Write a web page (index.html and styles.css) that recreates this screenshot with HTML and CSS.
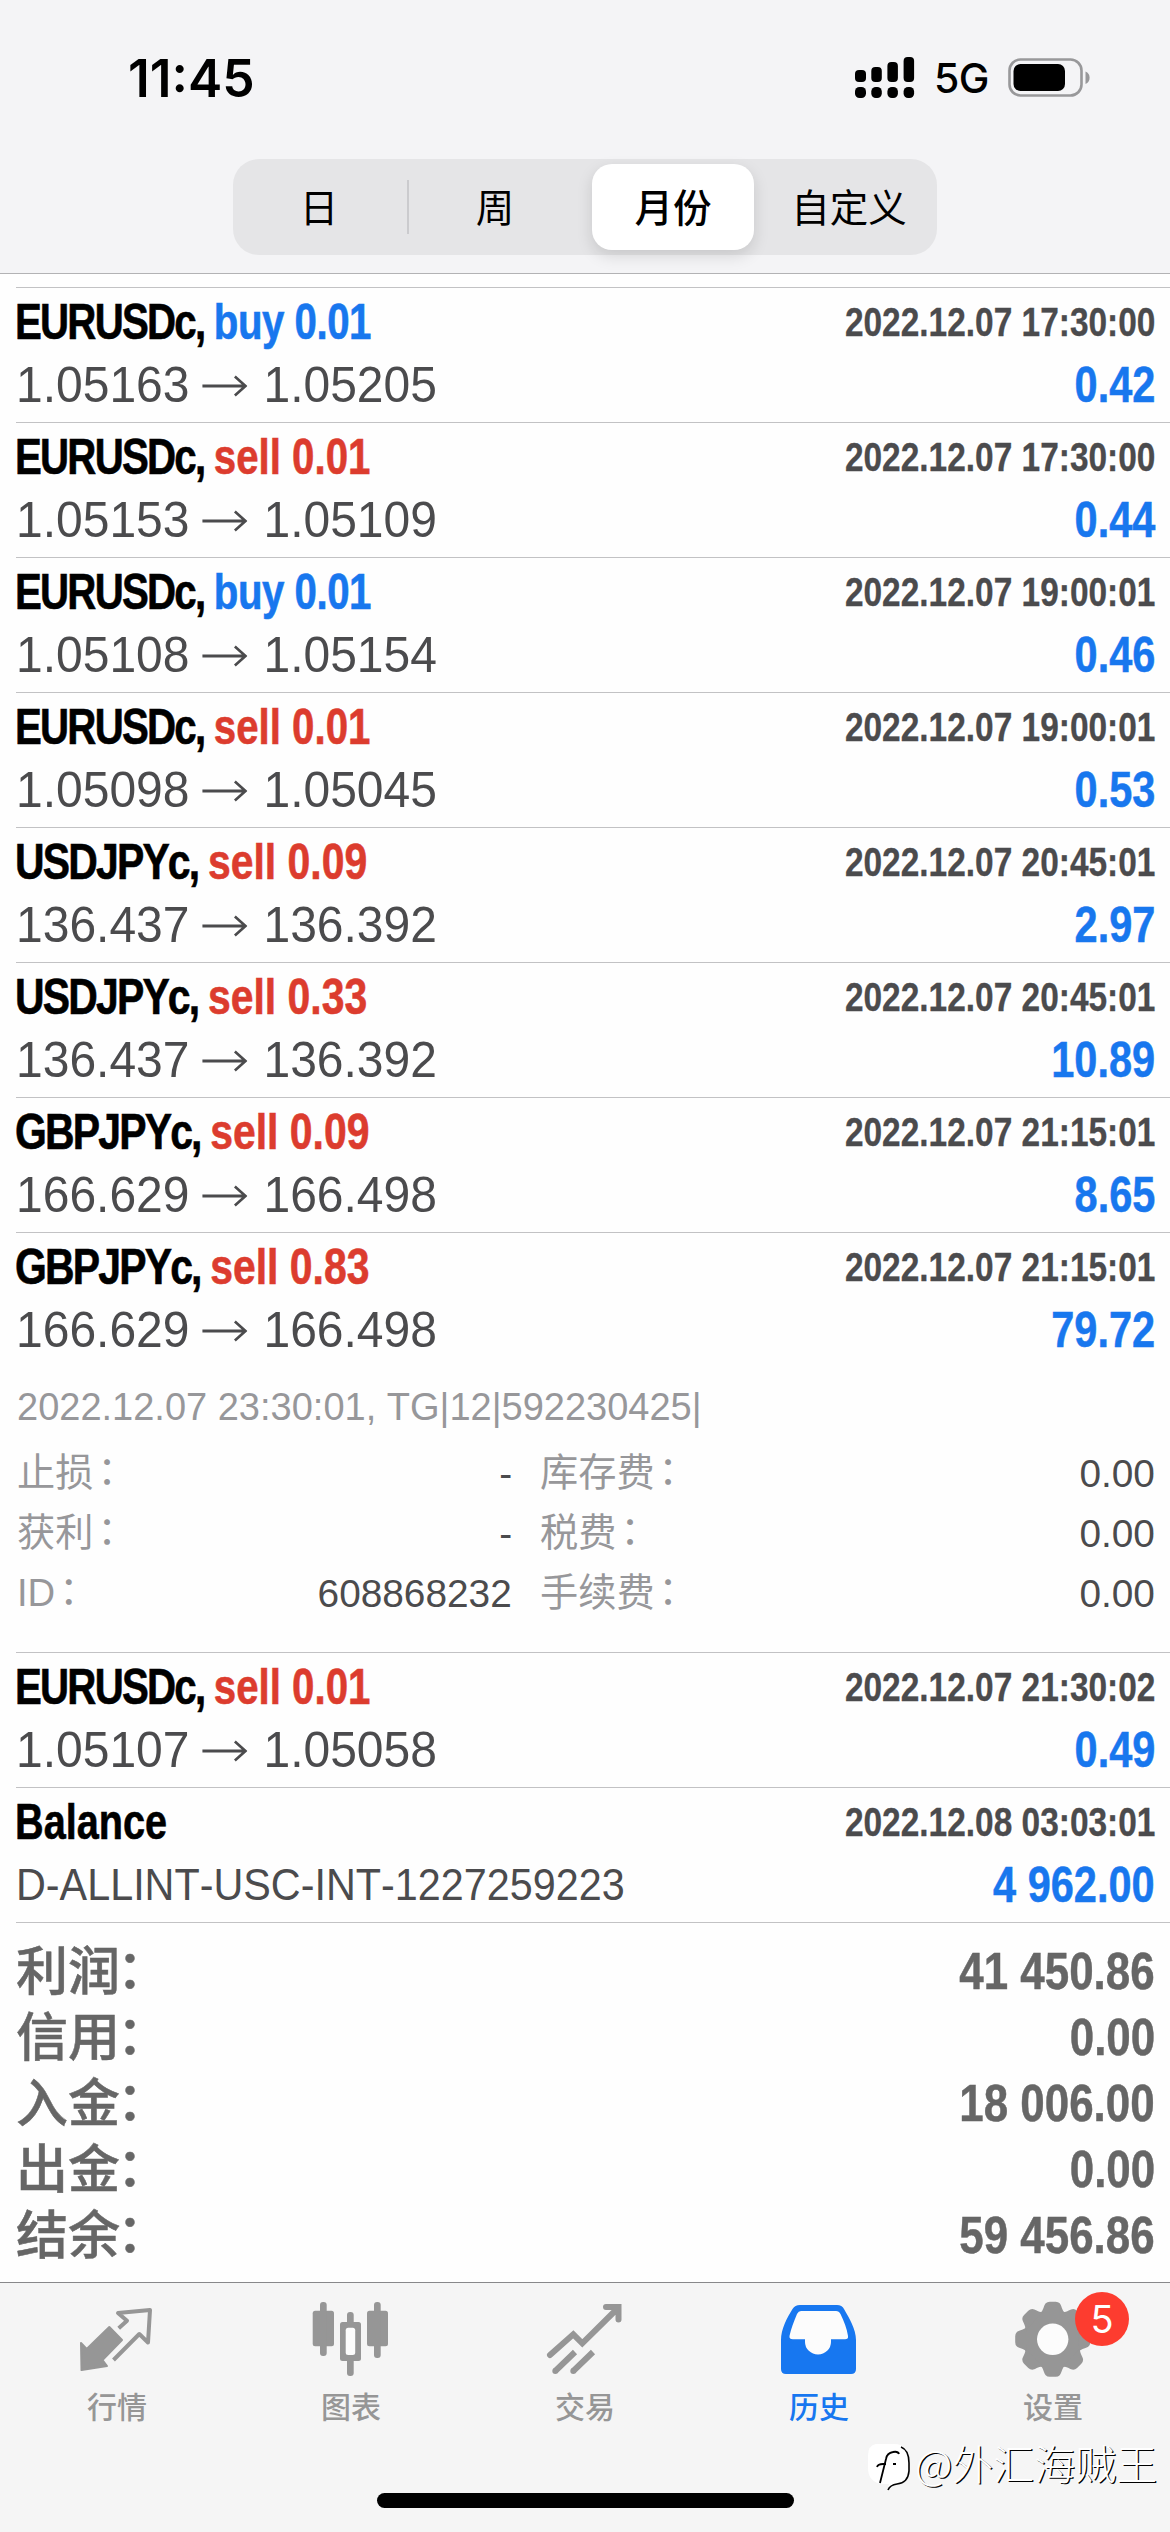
FILE: index.html
```html
<!DOCTYPE html>
<html lang="zh-CN">
<head>
<meta charset="utf-8">
<title>历史</title>
<link rel="stylesheet" href="styles.css">
</head>
<body>
<svg class="defs" width="0" height="0">
  <symbol id="arrow" viewBox="0 0 47 24"><path d="M0 12H45M34 2.5L45 12L34 21.500" fill="none" stroke="currentColor" stroke-width="2.800"/></symbol>
</svg>
<div class="screen">
  <header class="header">
    <div class="status">
      <span class="clock">11:45</span>
      <div class="status-right">
        <svg class="signal" viewBox="0 0 60 42">
          <rect x="0" y="13" width="11" height="12" rx="4"/><rect x="16.300" y="10" width="10.500" height="15" rx="4"/><rect x="32.400" y="5" width="10.500" height="20" rx="4"/><rect x="48.600" y="0" width="10.500" height="25" rx="4"/>
          <rect x="0" y="30" width="11" height="11" rx="4.500"/><rect x="16.300" y="30" width="10.500" height="11" rx="4.500"/><rect x="32.400" y="30" width="10.500" height="11" rx="4.500"/><rect x="48.600" y="30" width="10.500" height="11" rx="4.500"/>
        </svg>
        <span class="network">5G</span>
        <svg class="battery" viewBox="0 0 83 40">
          <rect x="1.500" y="1.500" width="72" height="36" rx="11" fill="none" stroke="#98989a" stroke-width="2.600"/>
          <rect x="5.500" y="6" width="51.500" height="27" rx="7"/>
          <path d="M77.500 13.500C83 15.500 83 24 77.500 26Z" fill="#98989a"/>
        </svg>
      </div>
    </div>
    <nav class="segments">
      <span class="segment segment-early">日</span>
      <span class="segment segment-early divided">周</span>
      <span class="segment selected">月份</span>
      <span class="segment">自定义</span>
    </nav>
  </header>

  <main class="history">
    <article class="deal">
      <h2 class="title"><span class="symbol">EURUSDc, </span><b class="buy">buy 0.01</b></h2><time class="time">2022.12.07 17:30:00</time>
      <p class="prices">1.05163<svg class="arrow"><use href="#arrow"/></svg>1.05205</p><strong class="profit">0.42</strong>
    </article>
    <article class="deal">
      <h2 class="title"><span class="symbol">EURUSDc, </span><b class="sell">sell 0.01</b></h2><time class="time">2022.12.07 17:30:00</time>
      <p class="prices">1.05153<svg class="arrow"><use href="#arrow"/></svg>1.05109</p><strong class="profit">0.44</strong>
    </article>
    <article class="deal">
      <h2 class="title"><span class="symbol">EURUSDc, </span><b class="buy">buy 0.01</b></h2><time class="time">2022.12.07 19:00:01</time>
      <p class="prices">1.05108<svg class="arrow"><use href="#arrow"/></svg>1.05154</p><strong class="profit">0.46</strong>
    </article>
    <article class="deal">
      <h2 class="title"><span class="symbol">EURUSDc, </span><b class="sell">sell 0.01</b></h2><time class="time">2022.12.07 19:00:01</time>
      <p class="prices">1.05098<svg class="arrow"><use href="#arrow"/></svg>1.05045</p><strong class="profit">0.53</strong>
    </article>
    <article class="deal">
      <h2 class="title title-yen"><span class="symbol">USDJPYc, </span><b class="sell">sell 0.09</b></h2><time class="time">2022.12.07 20:45:01</time>
      <p class="prices">136.437<svg class="arrow"><use href="#arrow"/></svg>136.392</p><strong class="profit">2.97</strong>
    </article>
    <article class="deal">
      <h2 class="title title-yen"><span class="symbol">USDJPYc, </span><b class="sell">sell 0.33</b></h2><time class="time">2022.12.07 20:45:01</time>
      <p class="prices">136.437<svg class="arrow"><use href="#arrow"/></svg>136.392</p><strong class="profit">10.89</strong>
    </article>
    <article class="deal">
      <h2 class="title title-yen"><span class="symbol">GBPJPYc, </span><b class="sell">sell 0.09</b></h2><time class="time">2022.12.07 21:15:01</time>
      <p class="prices">166.629<svg class="arrow"><use href="#arrow"/></svg>166.498</p><strong class="profit">8.65</strong>
    </article>
    <article class="deal">
      <h2 class="title title-yen"><span class="symbol">GBPJPYc, </span><b class="sell">sell 0.83</b></h2><time class="time">2022.12.07 21:15:01</time>
      <p class="prices">166.629<svg class="arrow"><use href="#arrow"/></svg>166.498</p><strong class="profit">79.72</strong>
    </article>
    <section class="detail">
      <p class="comment">2022.12.07 23:30:01, TG|12|592230425|</p>
      <dl class="fields">
        <div class="field"><dt>止损<i class="colon">：</i></dt><dd>-</dd></div>
        <div class="field"><dt>库存费<i class="colon">：</i></dt><dd>0.00</dd></div>
        <div class="field"><dt>获利<i class="colon">：</i></dt><dd>-</dd></div>
        <div class="field"><dt>税费<i class="colon">：</i></dt><dd>0.00</dd></div>
        <div class="field"><dt>ID<i class="colon">：</i></dt><dd>608868232</dd></div>
        <div class="field"><dt>手续费<i class="colon">：</i></dt><dd>0.00</dd></div>
      </dl>
    </section>
    <article class="deal">
      <h2 class="title"><span class="symbol">EURUSDc, </span><b class="sell">sell 0.01</b></h2><time class="time">2022.12.07 21:30:02</time>
      <p class="prices">1.05107<svg class="arrow"><use href="#arrow"/></svg>1.05058</p><strong class="profit">0.49</strong>
    </article>
    <article class="deal">
      <h2 class="title title-balance">Balance</h2><time class="time">2022.12.08 03:03:01</time>
      <p class="prices reference">D-ALLINT-USC-INT-1227259223</p><strong class="profit">4 962.00</strong>
    </article>
    <section class="totals">
      <div class="total"><span>利润<i class="colon">：</i></span><strong>41 450.86</strong></div>
      <div class="total"><span>信用<i class="colon">：</i></span><strong>0.00</strong></div>
      <div class="total"><span>入金<i class="colon">：</i></span><strong>18 006.00</strong></div>
      <div class="total"><span>出金<i class="colon">：</i></span><strong>0.00</strong></div>
      <div class="total"><span>结余<i class="colon">：</i></span><strong>59 456.86</strong></div>
    </section>
  </main>

  <footer class="tabbar">
    <nav class="tabs">
      <a class="tab">
        <svg class="icon" viewBox="0 0 80 80" stroke-linejoin="round">
          <path d="M4 45L9.700 51L32.300 29L45 42L25.500 62L30 68L4.500 72Z" fill="currentColor" stroke="currentColor" stroke-width="2"/>
          <path d="M41.700 30.300L50 22.700L41 15L73 12L71 44.500L62.300 36L36.500 62" fill="none" stroke="currentColor" stroke-width="4"/>
        </svg>
        <span>行情</span>
      </a>
      <a class="tab">
        <svg class="icon" viewBox="0 0 80 80" fill="currentColor">
          <rect x="1.700" y="12.700" width="21.300" height="35.500" rx="2.500"/><rect x="9" y="4" width="6.700" height="54" rx="3"/>
          <rect x="36" y="14" width="6.700" height="64" rx="3"/><rect x="29" y="24" width="21" height="39" rx="2.500"/><rect x="34.700" y="29.700" width="9.500" height="27.300" rx="2.500" fill="#fcfcfc"/>
          <rect x="56" y="12.700" width="21" height="35.500" rx="2.500"/><rect x="63" y="4" width="6.700" height="56" rx="3"/>
        </svg>
        <span>图表</span>
      </a>
      <a class="tab">
        <svg class="icon" viewBox="0 0 80 80" fill="none" stroke="currentColor" stroke-width="6">
          <path d="M5 57L28.300 36.300L37.300 45.300L73 10M61 9H73.500V21.500" stroke-linecap="round"/>
          <path d="M10.300 73L30 54M28.300 73L48 54"/>
          <path d="M10.300 73h.01M28.300 73h.01" stroke-linecap="round"/>
        </svg>
        <span>交易</span>
      </a>
      <a class="tab active">
        <svg class="icon" viewBox="0 0 80 80">
          <path d="M21 7H58Q63 7 65 11C70 20 77 31 77 42V71Q77 76 72 76H7Q2 76 2 71V42C2 31 8 20 13.500 11Q16 7 21 7Z" fill="currentColor"/>
          <path d="M22 13H57Q60 13 61.500 16C65 23 68 31 69 38Q69.500 41.300 66 41.300H52V44A13 12.500 0 0 1 26 44V41.300H14Q10 41.300 10.500 38C12 31 15 23 18 16Q19.500 13 22 13Z" fill="#fcfcfc"/>
        </svg>
        <span>历史</span>
      </a>
      <a class="tab">
        <svg class="icon" viewBox="0 0 80 80" fill="currentColor">
          <g transform="translate(39.700 41.300)">
            <circle r="29.500"/>
            <g id="teeth"><path id="tooth" d="M-12.500 -26C-9 -29 -9 -34 -7 -36Q-5.500 -37.500 -3 -37.500H3Q5.500 -37.500 7 -36C9 -34 9 -29 12.500 -26Z"/><use href="#tooth" transform="rotate(45)"/><use href="#tooth" transform="rotate(90)"/><use href="#tooth" transform="rotate(135)"/></g>
            <use href="#teeth" transform="rotate(180)"/>
            <circle r="15.700" fill="#fcfcfc"/>
          </g>
        </svg>
        <i class="badge">5</i>
        <span>设置</span>
      </a>
    </nav>
    <div class="home-indicator"></div>
    <div class="watermark">
      <svg class="logo" viewBox="0 0 44 48" fill="none">
        <path d="M8 1H26Q41 1 41 18V27Q41 40 29 41L20 46L21 41H14Q0 39 0 25V13Q0 2 8 1Z" fill="#fff"/>
        <path d="M33 4Q41 7 41 20V28Q40 40 29 41Q22 42 20 47" stroke="#000" stroke-width="1.600"/>
        <path d="M31 11Q30 8 25 9Q19 10 18 16L12 40M9 24Q10 21 15 21H18M25 21H28" stroke="#000" stroke-width="1.800"/>
      </svg>
      <span>@外汇海贼王</span>
    </div>
  </footer>
</div>
</body>
</html>
```
FILE: styles.css
```css
* { box-sizing: border-box; }

body {
  margin: 0;
  background: #fefefe;
  font-family: "Liberation Sans", "Noto Sans CJK SC", sans-serif;
  font-kerning: none;
  color: #4b4b4d;
}

h2, p, dl, dd { margin: 0; }

.defs { position: absolute; }

.screen {
  display: flex;
  flex-direction: column;
  width: 1170px;
  height: 2532px;
  overflow: hidden;
}

/* Status bar and period switch */
.header {
  height: 274px;
  border-bottom: 1px solid #b2b2b4;
  background: #f4f4f6;
  color: #000;
}

.status {
  display: flex;
  justify-content: space-between;
  align-items: center;
  height: 159px;
  padding: 0 79px 3px 128px;
}

.clock {
  font: 600 51.5px/60px Inter, sans-serif;
  letter-spacing: 0;
}

.status-right { display: flex; align-items: center; }
.signal { width: 60px; height: 42px; }
.network {
  margin: 0 19px 0 19px;
  font: 500 41px/60px Inter, sans-serif;
  letter-spacing: -.5px;
}
.battery { width: 83px; height: 40px; }

.segments {
  display: grid;
  grid-template-columns: repeat(4, 1fr);
  width: 704px;
  height: 96px;
  margin: 0 auto;
  border-radius: 26px;
  background: #e5e5e7;
  font: 400 38.5px/88px "Noto Sans CJK SC", sans-serif;
}

.segment { position: relative; padding: 2px 0; text-align: center; }
.segment-early { padding-right: 4px; }
.divided::before {
  content: "";
  position: absolute;
  left: -2px;
  top: 21px;
  width: 2px;
  height: 54px;
  background: #cbcbce;
}
.selected {
  height: 86px;
  margin: 5px 7px;
  padding: 0;
  line-height: 82px;
  border-radius: 20px;
  background: #fff;
  box-shadow: 0 6px 16px rgba(0, 0, 0, .13);
  font-weight: 500;
}

/* Deal list */
.history { flex: 1; padding-top: 13px; }

.deal {
  display: grid;
  grid-template-columns: 1fr auto;
  grid-template-rows: 63px 63px;
  height: 135px;
  margin-left: 16px;
  padding: 3px 15px 0 0;
  border-top: 1px solid #c2c2c4;
  line-height: 63px;
  white-space: nowrap;
}

.title {
  justify-self: start;
  margin-left: -1px;
  font-size: 50px;
  font-weight: 700;
  color: #000;
  transform: scaleX(.805);
  transform-origin: left;
  -webkit-text-stroke: .6px currentColor;
}
.symbol { letter-spacing: -2.2px; }
.title-yen { transform: scaleX(.818); }
.title-balance { transform: scaleX(.793); }
.buy { color: #1877ee; letter-spacing: -.6px; }
.sell { color: #dc3c2e; }

.time {
  justify-self: end;
  font-size: 40px;
  font-weight: 700;
  transform: scaleX(.836);
  transform-origin: right;
  -webkit-text-stroke: .3px currentColor;
}

.prices {
  display: flex;
  align-items: center;
  justify-self: start;
  font-size: 50px;
  transform: scaleX(.96);
  transform-origin: left;
}
.reference { font-size: 43.5px; transform: scaleX(.95); }
.arrow { width: 47px; height: 24px; margin: 0 17px 0 13px; }

.profit {
  justify-self: end;
  font-size: 50px;
  color: #1877ee;
  transform: scaleX(.83);
  transform-origin: right;
  -webkit-text-stroke: .5px currentColor;
}

/* Expanded deal */
.detail {
  height: 285px;
  padding: 9px 15px 0 17px;
  font-size: 39.5px;
  line-height: 60px;
  color: #97979a;
}
.comment {
  white-space: nowrap;
  transform: scaleX(.962);
  transform-origin: left;
}
.fields {
  display: grid;
  grid-template-columns: 495px 1fr;
  column-gap: 28px;
  margin-top: 7px;
}
.field { display: flex; justify-content: space-between; height: 60px; }
.field dt { font-size: 38.2px; }
.field dd {
  color: #4b4b4d;
  transform: scaleX(.982);
  transform-origin: right;
}
.colon {
  display: inline-block;
  font-style: normal;
  line-height: 1;
  transform: translate(4px, -2px);
}

/* Summary */
.totals {
  margin-left: 16px;
  padding: 15px 15px 0 0;
  border-top: 1px solid #c2c2c4;
  color: #666;
}
.total {
  display: flex;
  justify-content: space-between;
  height: 66px;
  line-height: 66px;
}
.total span {
  font: 500 52px/60px "Noto Sans CJK SC", sans-serif;
  -webkit-text-stroke: .5px currentColor;
}
.total .colon { transform: translate(-3px, -2px); }
.total strong {
  font-size: 52.5px;
  transform: scaleX(.836);
  transform-origin: right;
  -webkit-text-stroke: .5px currentColor;
}

/* Tab bar */
.tabbar {
  position: relative;
  height: 250px;
  border-top: 1px solid #88888a;
  background: #f5f5f5;
}
.tabs { display: grid; grid-template-columns: repeat(5, 1fr); padding-top: 15px; }
.tab {
  position: relative;
  display: flex;
  flex-direction: column;
  align-items: center;
  color: #969696;
  font: 500 30px/44px "Noto Sans CJK SC", sans-serif;
}
.tab span { margin-top: 5px; }
.active { color: #1777f0; }
.icon { display: block; width: 80px; height: 80px; }
.badge {
  position: absolute;
  left: 139px;
  top: -6px;
  width: 54px;
  height: 54px;
  border-radius: 50%;
  background: #fd3c2f;
  color: #fff;
  font: 400 38px/54px Inter, sans-serif;
  text-align: center;
}

.home-indicator {
  width: 417px;
  height: 15px;
  margin: 66px auto 0;
  border-radius: 8px;
  background: #000;
}

.watermark {
  position: absolute;
  left: 868px;
  top: 147px;
  display: flex;
  align-items: center;
  height: 64px;
  color: #fff;
  font: 300 41px/64px "Noto Sans CJK SC", sans-serif;
  text-shadow: 1.2px 1.2px 0 #000;
  white-space: nowrap;
}
.logo { width: 44px; height: 48px; margin: 10px 3px 0 0; }
```
